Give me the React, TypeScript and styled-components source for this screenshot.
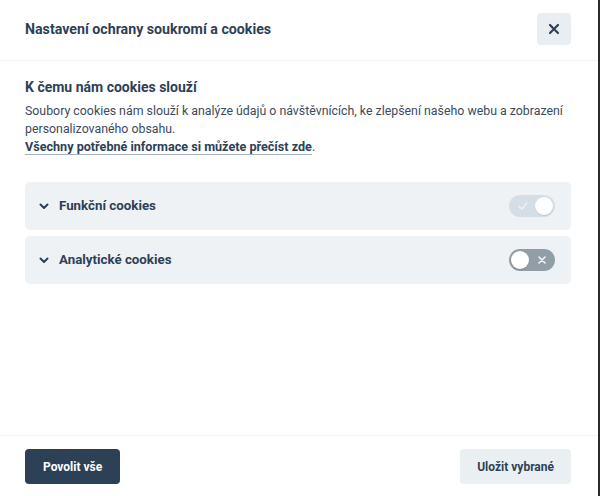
import React from "react";
import styled, { createGlobalStyle } from "styled-components";

const Global = createGlobalStyle`
  html, body { margin: 0; padding: 0; background: #2b2b2b; }
  body { font-family: Roboto, "Liberation Sans", Arial, sans-serif; }
  * { box-sizing: border-box; }
`;

const Modal = styled.div`
  width: 598px;
  height: 496px;
  background: #fff;
  display: flex;
  flex-direction: column;
  color: #2d4156;
`;

const Header = styled.div`
  height: 61px;
  flex: none;
  display: flex;
  align-items: center;
  justify-content: space-between;
  padding: 0 27px 2px 25px;
  border-bottom: 1px solid #f1f3f5;
`;

const Title = styled.h2`
  margin: 0;
  font-size: 14.2px;
  font-weight: 700;
`;

const CloseBtn = styled.button`
  width: 34px;
  height: 32px;
  border: none;
  border-radius: 4px;
  background: #e9eef2;
  display: flex;
  align-items: center;
  justify-content: center;
  padding: 0;
  cursor: pointer;
`;

const Body = styled.div`
  flex: 1;
  padding: 17px 27px 0 25px;
  display: flex;
  flex-direction: column;
`;

const SectionTitle = styled.h3`
  margin: 0 0 7px;
  font-size: 14px;
  line-height: 18px;
  font-weight: 700;
`;

const Desc = styled.p`
  margin: 0;
  font-size: 12.35px;
  line-height: 17.5px;
  color: #3c4b5c;
`;

const Link = styled.a`
  font-weight: 700;
  font-size: 12.6px;
  color: #2d4156;
  text-decoration: none;
  border-bottom: 1px solid #a7b3bf;
`;

const Blocks = styled.div`
  margin-top: 25px;
  display: flex;
  flex-direction: column;
  gap: 6px;
`;

const Block = styled.div`
  height: 48px;
  background: #eff2f5;
  border-radius: 5px;
  display: flex;
  align-items: center;
  padding: 0 16px 0 14px;
`;

const Chevron = styled.span`
  width: 20px;
  display: flex;
  align-items: center;
  margin-top: 2px;
`;

const Label = styled.span`
  flex: 1;
  font-size: 13.3px;
  font-weight: 700;
`;

const Toggle = styled.span<{ $on: boolean; $readonly?: boolean }>`
  position: relative;
  width: 46px;
  height: 22px;
  border-radius: 11px;
  background: ${(p) => (p.$readonly ? "#d5dee4" : p.$on ? "#2d4156" : "#919ea6")};
  display: flex;
  align-items: center;
  justify-content: ${(p) => (p.$on ? "flex-start" : "flex-end")};
  padding: 0 9px;
`;

const Knob = styled.span<{ $on: boolean }>`
  position: absolute;
  top: 2px;
  ${(p) => (p.$on ? "right: 2px;" : "left: 2px;")}
  width: 18px;
  height: 18px;
  border-radius: 50%;
  background: #fff;
  box-shadow: 0 1px 1px rgba(0, 0, 0, 0.1);
`;

const Footer = styled.div`
  height: 61px;
  flex: none;
  border-top: 1px solid #f1f3f5;
  display: flex;
  align-items: flex-start;
  justify-content: space-between;
  padding: 13px 27px 0 25px;
`;

const Btn = styled.button<{ $primary?: boolean }>`
  height: 35px;
  border: none;
  border-radius: 4px;
  padding: 0 ${(p) => (p.$primary ? "18px" : "17px")};
  font-family: inherit;
  font-size: 12px;
  font-weight: 700;
  background: ${(p) => (p.$primary ? "#2d4156" : "#eaeff2")};
  color: ${(p) => (p.$primary ? "#fff" : "#2d4156")};
  cursor: pointer;
`;

const ChevronIcon = () => (
  <svg width="10" height="7" viewBox="0 0 10 7">
    <path d="M1.5 1.5 L5 5 L8.5 1.5" fill="none" stroke="#2d4156" strokeWidth="2" strokeLinecap="round" strokeLinejoin="round" />
  </svg>
);

const Row = ({ label, on, readonly }: { label: string; on: boolean; readonly?: boolean }) => (
  <Block>
    <Chevron>
      <ChevronIcon />
    </Chevron>
    <Label>{label}</Label>
    <Toggle $on={on} $readonly={readonly}>
      {on ? (
        <svg width="10" height="8" viewBox="0 0 10 8">
          <path d="M1 4.2 L3.8 7 L9 1" fill="none" stroke="#eef2f5" strokeWidth="1.4" strokeLinecap="round" strokeLinejoin="round" />
        </svg>
      ) : (
        <svg width="8" height="8" viewBox="0 0 8 8">
          <path d="M1 1 L7 7 M7 1 L1 7" fill="none" stroke="#f3f5f7" strokeWidth="1.6" strokeLinecap="round" />
        </svg>
      )}
      <Knob $on={on} />
    </Toggle>
  </Block>
);

export default function App() {
  return (
    <>
      <Global />
      <Modal>
        <Header>
          <Title>Nastavení ochrany soukromí a cookies</Title>
          <CloseBtn aria-label="Zavřít">
            <svg width="12" height="12" viewBox="0 0 12 12">
              <path d="M2 2 L10 10 M10 2 L2 10" stroke="#2d4156" strokeWidth="2.2" strokeLinecap="round" />
            </svg>
          </CloseBtn>
        </Header>
        <Body>
          <SectionTitle>K čemu nám cookies slouží</SectionTitle>
          <Desc>
            Soubory cookies nám slouží k analýze údajů o návštěvnících, ke zlepšení našeho webu a zobrazení
            personalizovaného obsahu.
            <br />
            <Link href="#">Všechny potřebné informace si můžete přečíst zde</Link>.
          </Desc>
          <Blocks>
            <Row label="Funkční cookies" on readonly />
            <Row label="Analytické cookies" on={false} />
          </Blocks>
        </Body>
        <Footer>
          <Btn $primary>Povolit vše</Btn>
          <Btn>Uložit vybrané</Btn>
        </Footer>
      </Modal>
    </>
  );
}
